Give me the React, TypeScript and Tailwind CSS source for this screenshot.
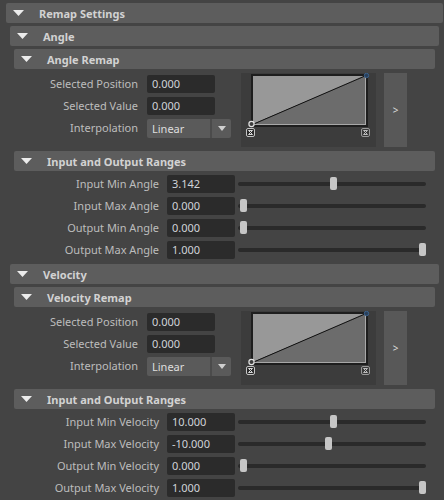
import type { ReactNode } from 'react'

interface RangeRow {
  label: string
  value: string
  /** handle position along the slider, 0..1 */
  pos: number
}

const ANGLE_RANGES: RangeRow[] = [
  { label: 'Input Min Angle', value: '3.142', pos: 0.5 },
  { label: 'Input Max Angle', value: '0.000', pos: 0 },
  { label: 'Output Min Angle', value: '0.000', pos: 0 },
  { label: 'Output Max Angle', value: '1.000', pos: 1 },
]

const VELOCITY_RANGES: RangeRow[] = [
  { label: 'Input Min Velocity', value: '10.000', pos: 0.5 },
  { label: 'Input Max Velocity', value: '-10.000', pos: 0.475 },
  { label: 'Output Min Velocity', value: '0.000', pos: 0 },
  { label: 'Output Max Velocity', value: '1.000', pos: 1 },
]

export default function App() {
  return (
    <div className="h-[500px] w-[444px] overflow-hidden bg-[#444444] pl-[6px] pr-[1px] pt-[3px] font-['Noto_Sans','Open_Sans',sans-serif]">
      <Frame title="Remap Settings" bodyClass="flex flex-col gap-[3px] px-[4px] pt-[3px]">
        <Frame title="Angle" bodyClass="px-[4px] pt-[3px]">
          <Frame title="Angle Remap">
            <RemapBlock />
          </Frame>
          <Frame title="Input and Output Ranges">
            <Ranges rows={ANGLE_RANGES} />
          </Frame>
        </Frame>
        <Frame title="Velocity" bodyClass="px-[4px] pt-[3px]">
          <Frame title="Velocity Remap">
            <RemapBlock />
          </Frame>
          <Frame title="Input and Output Ranges">
            <Ranges rows={VELOCITY_RANGES} />
          </Frame>
        </Frame>
      </Frame>
    </div>
  )
}

function Frame({
  title,
  bodyClass,
  children,
}: {
  title: string
  bodyClass?: string
  children: ReactNode
}) {
  return (
    <div>
      <div className="flex h-[20px] items-center rounded-[2px] bg-[#5d5d5d] pl-[7px]">
        <svg width="11" height="6" viewBox="0 0 11 6" className="shrink-0">
          <polygon points="0,0 11,0 5.5,6" fill="#ececec" />
        </svg>
        <span className="ml-[15px] text-[11px] font-bold leading-none text-[#d2d2d2]">{title}</span>
      </div>
      <div className={bodyClass}>{children}</div>
    </div>
  )
}

function NumField({ value }: { value: string }) {
  return (
    <div className="flex h-[18px] w-[68px] items-center rounded-[2px] bg-[#2b2b2b] pl-[5px] pt-[1px] text-[11px] text-[#d0d3d8]">
      {value}
    </div>
  )
}

function RemapBlock() {
  return (
    <div className="flex py-[4px]">
      <div className="flex flex-col gap-[4px] pt-[2px]">
        <div className="flex items-center">
          <span className="w-[124px] text-right text-[11px] text-[#bdbdbd]">Selected Position</span>
          <div className="ml-[9px]">
            <NumField value="0.000" />
          </div>
        </div>
        <div className="flex items-center">
          <span className="w-[124px] text-right text-[11px] text-[#bdbdbd]">Selected Value</span>
          <div className="ml-[9px]">
            <NumField value="0.000" />
          </div>
        </div>
        <div className="flex items-center">
          <span className="w-[124px] text-right text-[11px] text-[#bdbdbd]">Interpolation</span>
          <div className="ml-[9px] flex h-[19px] w-[84px] items-center rounded-[2px] bg-[#5a5a5a]">
            <span className="flex-1 pl-[5px] pt-[1px] text-[11px] text-[#dedede]">Linear</span>
            <div className="flex h-full w-[21px] items-center justify-center border-l-2 border-[#4b4b4b]">
              <svg width="8" height="5" viewBox="0 0 8 5">
                <polygon points="0,0 8,0 4,5" fill="#cfcfcf" />
              </svg>
            </div>
          </div>
        </div>
      </div>
      <RampGraph />
      <div className="ml-[8px] flex h-[74px] w-[23px] items-center justify-center bg-[#585858] text-[10px] text-[#dcdcdc]">
        &gt;
      </div>
    </div>
  )
}

function RampGraph() {
  return (
    <svg width="135" height="74" viewBox="0 0 135 74" className="ml-[10px] shrink-0">
      <rect x="0" y="0" width="135" height="74" fill="#3c3c3c" />
      <rect x="10" y="1" width="117" height="53" fill="#1e1e1e" />
      <polygon points="12,3 12,51 125,3" fill="#989898" />
      <polygon points="12,51 125,51 125,3" fill="#6c6c6c" />
      <line x1="12" y1="51.5" x2="125" y2="51.5" stroke="#a8a8a8" />
      <line x1="124.5" y1="3" x2="124.5" y2="52" stroke="#a8a8a8" />
      <line x1="10.5" y1="52" x2="125" y2="2.5" stroke="#111" strokeWidth="1" />
      <circle cx="10.5" cy="51" r="2.6" fill="#3c3c3c" stroke="#e2e2e2" strokeWidth="1.2" />
      <circle cx="125.5" cy="2.5" r="2.2" fill="#2a3f58" stroke="#3b6390" strokeWidth="1" />
      <Marker x={5} light />
      <Marker x={120} />
    </svg>
  )
}

function Marker({ x, light }: { x: number; light?: boolean }) {
  return (
    <g>
      <rect
        x={x + 0.5}
        y={55.5}
        width="8"
        height="8"
        rx="1.5"
        fill={light ? '#2a2a2a' : '#3a3a3a'}
        stroke={light ? '#c4c4c4' : '#9a9a9a'}
      />
      <polygon
        points={`${x + 2.5},${57.5} ${x + 6.5},${57.5} ${x + 2.5},${61.5} ${x + 6.5},${61.5}`}
        fill="none"
        stroke={light ? '#d8d8d8' : '#bdbdbd'}
        strokeWidth="1"
      />
    </g>
  )
}

function Ranges({ rows }: { rows: RangeRow[] }) {
  return (
    <div className="flex flex-col gap-[4px] pb-[2px] pt-[4px]">
      {rows.map((r) => (
        <div key={r.label} className="flex items-center">
          <span className="w-[145px] text-right text-[11px] text-[#bdbdbd]">{r.label}</span>
          <div className="ml-[8px]">
            <NumField value={r.value} />
          </div>
          <Slider pos={r.pos} />
        </div>
      ))}
    </div>
  )
}

function Slider({ pos }: { pos: number }) {
  return (
    <div className="relative ml-[3px] flex h-[18px] w-[188px] items-center">
      <div className="h-[4px] w-full rounded-full bg-[#2a2a2a]" />
      <div
        className="absolute top-[2px] h-[13px] w-[7px] rounded-[2px] bg-[#c6c6c6]"
        style={{ left: 2 + pos * 179 }}
      />
    </div>
  )
}
